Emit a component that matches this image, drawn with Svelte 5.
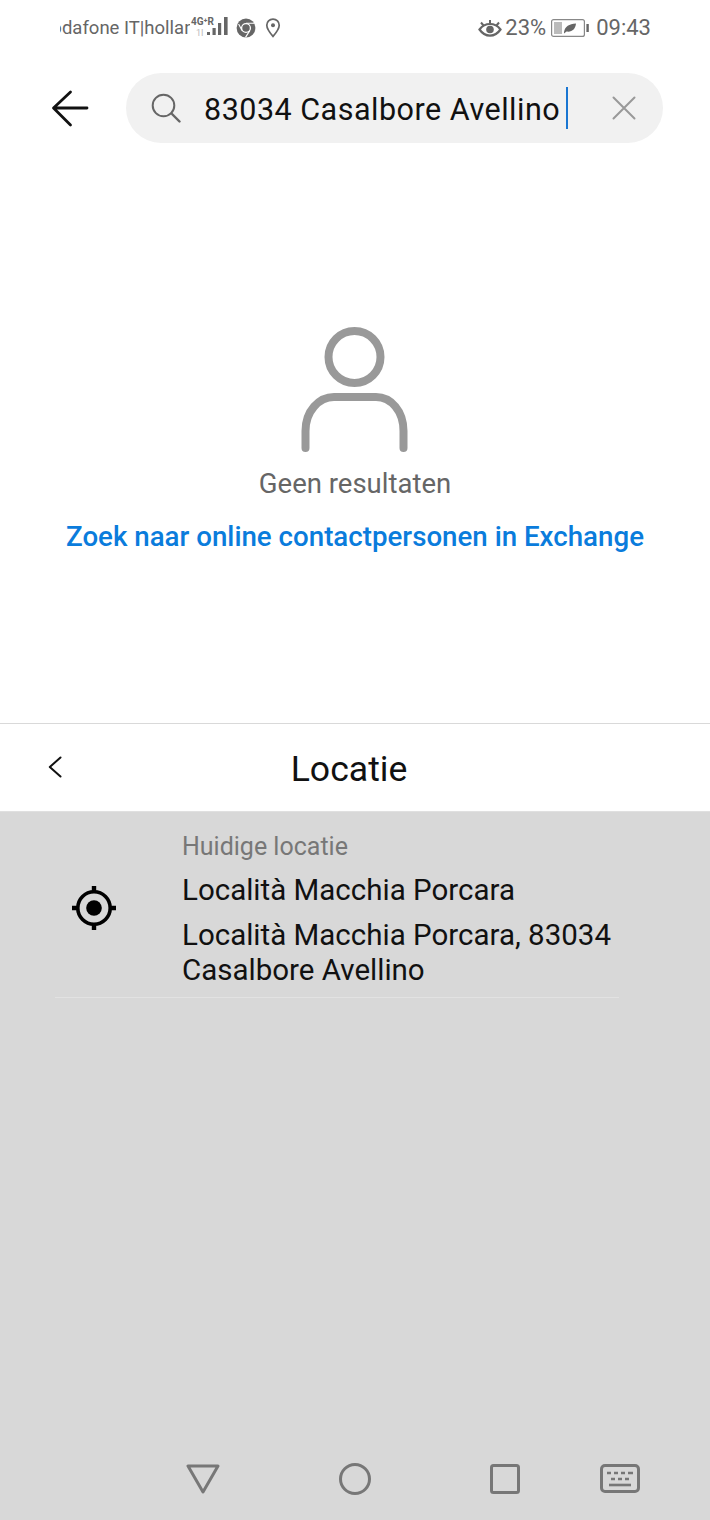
<script lang="ts">
  const query = '83034 Casalbore Avellino';
</script>

<div class="screen">
  <div class="status">
    <div class="status-left">
      <span class="carrier"><span class="carrier-text">Vodafone IT|hollandsnieuwe</span></span>
      <div class="signal">
        <span class="net">4G⁺R</span>
        <span class="net2">1I</span>
        <svg width="23" height="22" viewBox="0 0 23 22">
          <rect x="0" y="16" width="3" height="3" fill="#666" />
          <rect x="5.5" y="12" width="3.2" height="7" fill="#666" />
          <rect x="11" y="7" width="3.2" height="12" fill="#666" />
          <rect x="17" y="1" width="3.6" height="18" fill="#666" />
        </svg>
      </div>
      <svg class="chrome" width="20" height="20" viewBox="0 0 20 20">
        <circle cx="10" cy="10" r="9.4" fill="#666" />
        <circle cx="10" cy="10" r="4.4" fill="#666" stroke="#fff" stroke-width="1.3" />
        <path d="M10 5.2H18.6M6 12.5L2.6 6M13.8 12.6L9.5 19.4" stroke="#fff" stroke-width="1.1" fill="none" />
      </svg>
      <svg class="pin" width="16" height="20" viewBox="0 0 16 20">
        <path d="M8 1.2C4.4 1.2 1.8 3.9 1.8 7.2C1.8 11.2 8 18.4 8 18.4C8 18.4 14.2 11.2 14.2 7.2C14.2 3.9 11.6 1.2 8 1.2Z" fill="none" stroke="#666" stroke-width="1.7" />
        <circle cx="8" cy="7.2" r="2" fill="#666" />
      </svg>
    </div>
    <div class="status-right">
      <svg width="24" height="20" viewBox="0 0 24 20">
        <path d="M1.5 11.5C4.5 7.5 8 6 12 6C16 6 19.5 7.5 22.5 11.5C19.5 15.8 16 17.6 12 17.6C8 17.6 4.5 15.8 1.5 11.5Z" fill="none" stroke="#666" stroke-width="2.2" />
        <circle cx="12" cy="11.5" r="3.8" fill="#666" />
        <path d="M3 4.5L5.5 7.5M12 2V5M21 4.5L18.5 7.5" stroke="#666" stroke-width="2" />
      </svg>
      <span class="pct">23%</span>
      <svg class="battery" width="38" height="20" viewBox="0 0 38 20">
        <rect x="0.6" y="1.6" width="32.8" height="16.8" rx="2" fill="none" stroke="#888" stroke-width="1.2" />
        <rect x="3" y="4" width="8" height="12" fill="#bbb" />
        <path d="M13 14C14 8.5 18 6 25 5.6C24.5 11 21 14.5 15.5 13.6L13 15.5Z" fill="#666" />
        <rect x="35.4" y="6" width="2.4" height="8" fill="#666" />
      </svg>
      <span class="time">09:43</span>
    </div>
  </div>

  <div class="search-row">
    <svg class="back" width="38" height="38" viewBox="0 0 38 38">
      <path d="M36 19H3M19.5 3L2.5 19L19.5 36" fill="none" stroke="#111" stroke-width="2.8" stroke-linecap="round" stroke-linejoin="round" />
    </svg>
    <div class="pill">
      <svg class="lens" width="30" height="30" viewBox="0 0 30 30">
        <circle cx="12.5" cy="12.5" r="10.8" fill="none" stroke="#666" stroke-width="2" />
        <path d="M20.5 20.5L28.5 28.5" stroke="#666" stroke-width="2.4" stroke-linecap="round" />
      </svg>
      <span class="query">{query}</span>
      <span class="caret"></span>
      <svg class="clear" width="24" height="24" viewBox="0 0 24 24">
        <path d="M1.5 1.5L22.5 22.5M22.5 1.5L1.5 22.5" stroke="#999" stroke-width="2" stroke-linecap="round" />
      </svg>
    </div>
  </div>

  <div class="empty">
    <svg width="108" height="126" viewBox="0 0 108 126">
      <circle cx="53.5" cy="30" r="26" fill="none" stroke="#999" stroke-width="8" />
      <path d="M4.5 121V104C4.5 84 18 70 33 70H75C90 70 102.5 84 102.5 104V121" fill="none" stroke="#999" stroke-width="8" stroke-linecap="round" />
    </svg>
    <p class="none">Geen resultaten</p>
    <p class="link">Zoek naar online contactpersonen in Exchange</p>
  </div>

  <div class="sheet">
    <div class="sheet-head">
      <svg class="chev" width="14" height="22" viewBox="0 0 14 22">
        <path d="M12.5 1.5L1.8 11L12.5 20.5" fill="none" stroke="#111" stroke-width="2" stroke-linecap="round" stroke-linejoin="round" />
      </svg>
      <span class="title">Locatie</span>
    </div>
    <div class="panel">
      <div class="place">
        <svg class="target" width="44" height="44" viewBox="0 0 44 44">
          <circle cx="22" cy="22" r="16.2" fill="none" stroke="#000" stroke-width="3.6" />
          <circle cx="22" cy="22" r="7.8" fill="#000" />
          <path d="M22 0V6M22 38V44M0 22H6M38 22H44" stroke="#000" stroke-width="4.4" />
        </svg>
        <div class="place-text">
          <span class="hint">Huidige locatie</span>
          <span class="name">Località Macchia Porcara</span>
          <span class="addr">Località Macchia Porcara, 83034 Casalbore Avellino</span>
        </div>
      </div>
      <div class="nav">
        <svg width="34" height="30" viewBox="0 0 34 30">
          <path d="M2 2H32L17 28Z" fill="none" stroke="#777" stroke-width="3" stroke-linejoin="round" />
        </svg>
        <svg class="home" width="32" height="32" viewBox="0 0 32 32">
          <circle cx="16" cy="16" r="14.5" fill="none" stroke="#777" stroke-width="3" />
        </svg>
        <svg class="recent" width="30" height="30" viewBox="0 0 30 30">
          <rect x="1.5" y="1.5" width="27" height="27" rx="2" fill="none" stroke="#777" stroke-width="3" />
        </svg>
        <svg class="keys" width="40" height="30" viewBox="0 0 40 30">
          <rect x="1.5" y="1.5" width="37" height="26" rx="3.5" fill="none" stroke="#777" stroke-width="3" />
          <path d="M7 9H11M14 9H18M21 9H25M28 9H33M11 15H15M18 15H22M25 15H29" stroke="#777" stroke-width="2.6" />
          <path d="M9 21H31" stroke="#777" stroke-width="2.6" />
        </svg>
      </div>
    </div>
  </div>
</div>

<style>
  :global(body) {
    margin: 0;
    background: #fff;
  }

  .screen {
    width: 710px;
    height: 1520px;
    display: flex;
    flex-direction: column;
    overflow: hidden;
    font-family: Roboto, "Noto Sans", sans-serif;
    background: #fff;
  }

  .status {
    height: 55px;
    flex-shrink: 0;
    display: flex;
    align-items: center;
    justify-content: space-between;
    padding: 0 59px 0 60px;
    color: #666;
    font-size: 22px;
  }

  .status-left,
  .status-right {
    display: flex;
    align-items: center;
  }

  .carrier {
    width: 130px;
    overflow: hidden;
    white-space: nowrap;
    font-size: 18.5px;
    position: relative;
  }

  .carrier-text {
    display: inline-block;
    margin-left: -20px;
  }

  .signal {
    position: relative;
    width: 40px;
    height: 24px;
    display: flex;
    justify-content: flex-end;
  }

  .net {
    position: absolute;
    left: 1px;
    top: 0;
    font-size: 10px;
    font-weight: 700;
    white-space: nowrap;
  }

  .net2 {
    position: absolute;
    left: 6px;
    top: 12px;
    font-size: 9px;
    color: #bbb;
  }

  .chrome {
    margin-left: 6px;
  }

  .pin {
    margin-left: 9px;
  }

  .pct {
    margin-left: 3px;
  }

  .battery {
    margin-left: 5px;
  }

  .time {
    margin-left: 7px;
  }

  .search-row {
    display: flex;
    align-items: center;
    margin-top: 18px;
    padding-left: 51px;
  }

  .pill {
    width: 537px;
    height: 70px;
    margin-left: 37px;
    border-radius: 35px;
    background: #f1f1f1;
    display: flex;
    align-items: center;
    box-sizing: border-box;
    padding-left: 25px;
  }

  .query {
    margin-left: 23px;
    padding-top: 2px;
    font-size: 30.5px;
    letter-spacing: 0.5px;
    color: #111;
    white-space: nowrap;
  }

  .caret {
    width: 2px;
    height: 42px;
    margin-left: 6px;
    background: #1a76d2;
  }

  .clear {
    margin-left: 44px;
  }

  .empty {
    display: flex;
    flex-direction: column;
    align-items: center;
    height: 580px;
    padding-top: 184px;
    box-sizing: border-box;
  }

  .empty p {
    margin: 0;
    white-space: nowrap;
  }

  .none {
    margin-top: 12px !important;
    color: #666;
    font-size: 27.5px;
    line-height: 38px;
  }

  .link {
    margin-top: 15px !important;
    color: #0a7cdc;
    font-size: 27.7px;
    font-weight: 500;
    line-height: 38px;
  }

  .sheet {
    flex: 1;
    display: flex;
    flex-direction: column;
    border-top: 1px solid #d9d9d9;
    min-height: 0;
  }

  .sheet-head {
    height: 87px;
    flex-shrink: 0;
    display: flex;
    align-items: center;
    position: relative;
    justify-content: center;
    padding: 2px 12px 0 0;
    box-sizing: border-box;
  }

  .chev {
    position: absolute;
    left: 48px;
    top: 32px;
  }

  .title {
    font-size: 35.6px;
    color: #111;
  }

  .panel {
    flex: 1;
    background: #d8d8d8;
    display: flex;
    flex-direction: column;
    border-top: 1px solid #e0e0e0;
  }

  .place {
    display: flex;
    align-items: center;
    margin: 0 91px 0 55px;
    padding: 17px 0 9px;
    border-bottom: 1px solid #e2e2e2;
  }

  .target {
    margin-left: 17px;
    margin-bottom: 2px;
    flex-shrink: 0;
  }

  .place-text {
    display: flex;
    flex-direction: column;
    margin-left: 66px;
  }

  .hint {
    font-size: 25px;
    line-height: 36px;
    color: #777;
  }

  .name {
    font-size: 29.5px;
    line-height: 40px;
    margin-top: 5px;
    color: #111;
  }

  .addr {
    font-size: 29.5px;
    line-height: 35px;
    margin-top: 8px;
    color: #111;
  }

  .nav {
    margin-top: auto;
    height: 82px;
    display: flex;
    align-items: center;
    padding-left: 186px;
    box-sizing: border-box;
  }

  .home {
    margin-left: 119px;
  }

  .recent {
    margin-left: 119px;
  }

  .keys {
    margin-left: 80px;
  }
</style>
